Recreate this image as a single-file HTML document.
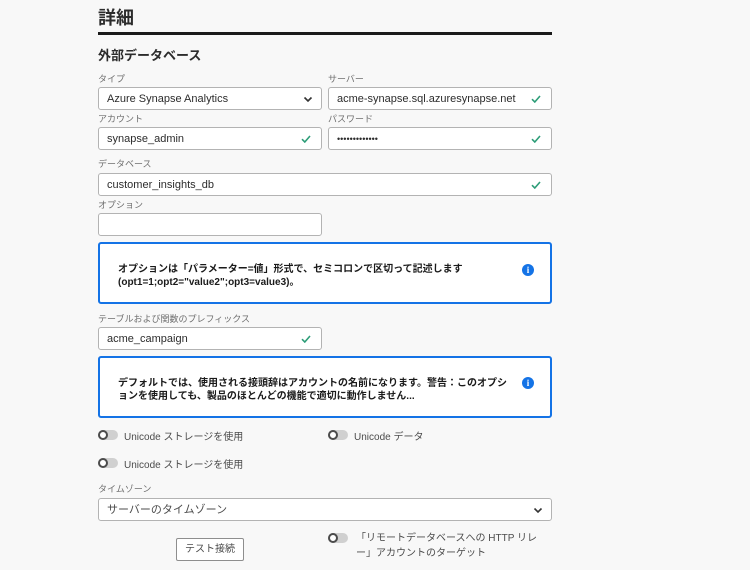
<!DOCTYPE html>
<html><head><meta charset="utf-8"><style>
*{box-sizing:border-box;margin:0;padding:0}
body{width:750px;height:570px;background:#f8f8f8;font-family:"Liberation Sans","Noto Sans CJK JP",sans-serif;position:relative;overflow:hidden;color:#2c2c2c}
.a{position:absolute}
.lbl{position:absolute;font-size:9px;color:#6e6e6e}
.in{position:absolute;height:23px;background:#fff;border:1px solid #b3b3b3;border-radius:3px;font-size:11px;line-height:21px;padding-top:1px;padding-left:8px;color:#2c2c2c}
.ck{position:absolute;right:10px;top:7px;width:10px;height:8px}
.chev{position:absolute;right:8px;top:8px;width:10px;height:7px}
.info{position:absolute;left:98px;width:454px;border:2px solid #1473e6;border-radius:3px;background:#fff;font-size:10px;font-weight:bold;line-height:13px;padding-left:18px;white-space:nowrap;color:#1a1a1a}
.ic{position:absolute;right:16px;width:12px;height:12px;border-radius:50%;background:#1473e6;color:#fff;font-size:9px;line-height:12px;text-align:center;font-family:"Liberation Serif",serif;font-weight:bold}
.tg{position:absolute;width:20px;height:10px;border-radius:5px;background:#d0d0d0}
.tg::before{content:"";position:absolute;left:0;top:0;width:10px;height:10px;border-radius:50%;box-sizing:border-box;border:2px solid #4b4b4b;background:#fff}
.tt{position:absolute;font-size:10px;color:#4b4b4b}
</style></head><body>
<svg width="0" height="0" style="position:absolute"><defs><symbol id="c" viewBox="0 0 10 8"><path d="M1 4.2L3.8 7L9 1" fill="none" stroke="#2d9d78" stroke-width="1.6"/></symbol></defs></svg>
<div class="a" style="left:98px;top:4px;font-size:18px;font-weight:bold;color:#2c2c2c">詳細</div>
<div class="a" style="left:98px;top:32px;width:454px;height:3px;background:#1a1a1a"></div>
<div class="a" style="left:98px;top:45px;font-size:13px;font-weight:bold">外部データベース</div>

<div class="lbl" style="left:98px;top:72px">タイプ</div>
<div class="lbl" style="left:328px;top:72px">サーバー</div>
<div class="in" style="left:98px;top:87px;width:224px">Azure Synapse Analytics<svg class="chev" viewBox="0 0 10 7"><path d="M1.5 1.5L5 5L8.5 1.5" fill="none" stroke="#333" stroke-width="1.6"/></svg></div>
<div class="in" style="left:328px;top:87px;width:224px">acme-synapse.sql.azuresynapse.net<svg class="ck"><use href="#c"/></svg></div>

<div class="lbl" style="left:98px;top:112px">アカウント</div>
<div class="lbl" style="left:328px;top:112px">パスワード</div>
<div class="in" style="left:98px;top:127px;width:224px">synapse_admin<svg class="ck"><use href="#c"/></svg></div>
<div class="in" style="left:328px;top:127px;width:224px;font-size:9px">•••••••••••••<svg class="ck"><use href="#c"/></svg></div>

<div class="lbl" style="left:98px;top:157px">データベース</div>
<div class="in" style="left:98px;top:173px;width:454px">customer_insights_db<svg class="ck"><use href="#c"/></svg></div>

<div class="lbl" style="left:98px;top:198px">オプション</div>
<div class="in" style="left:98px;top:213px;width:224px"></div>

<div class="info" style="top:242px;height:62px;padding-top:19px">オプションは「パラメーター=値」形式で、セミコロンで区切って記述します<br>(opt1=1;opt2="value2";opt3=value3)。<div class="ic" style="top:20px">i</div></div>

<div class="lbl" style="left:98px;top:312px">テーブルおよび関数のプレフィックス</div>
<div class="in" style="left:98px;top:327px;width:224px">acme_campaign<svg class="ck"><use href="#c"/></svg></div>

<div class="info" style="top:356px;height:62px;padding-top:19px">デフォルトでは、使用される接頭辞はアカウントの名前になります。警告：このオプシ<br>ョンを使用しても、製品のほとんどの機能で適切に動作しません...<div class="ic" style="top:19px">i</div></div>

<div class="tg" style="left:98px;top:430px"></div><div class="tt" style="left:124px;top:428px">Unicode ストレージを使用</div>
<div class="tg" style="left:328px;top:430px"></div><div class="tt" style="left:354px;top:428px">Unicode データ</div>
<div class="tg" style="left:98px;top:458px"></div><div class="tt" style="left:124px;top:456px">Unicode ストレージを使用</div>

<div class="lbl" style="left:98px;top:482px">タイムゾーン</div>
<div class="in" style="left:98px;top:498px;width:454px;color:#4b4b4b">サーバーのタイムゾーン<svg class="chev" viewBox="0 0 10 7"><path d="M1.5 1.5L5 5L8.5 1.5" fill="none" stroke="#333" stroke-width="1.6"/></svg></div>

<div class="a" style="left:176px;top:538px;width:68px;height:23px;border:1px solid #8e8e8e;border-radius:2px;background:#fff;font-size:10px;line-height:21px;text-align:center;color:#4b4b4b">テスト接続</div>
<div class="tg" style="left:328px;top:533px"></div>
<div class="tt" style="left:356px;top:531px;line-height:15px">「リモートデータベースへの HTTP リレ<br>ー」アカウントのターゲット</div>
</body></html>
